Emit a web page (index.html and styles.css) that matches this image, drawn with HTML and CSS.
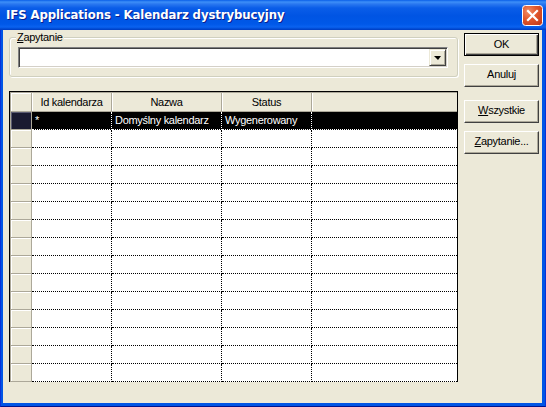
FILE: index.html
```html
<!DOCTYPE html>
<html>
<head>
<meta charset="utf-8">
<link rel="stylesheet" href="styles.css">
</head>
<body>
<div class="window">
  <div class="titlebar">
    <span class="title">IFS Applications - Kalendarz dystrybucyjny</span>
    <span class="close">
      <svg width="21" height="21" viewBox="0 0 21 21">
        <defs>
          <radialGradient id="cg" cx="0.3" cy="0.3" r="0.9">
            <stop offset="0" stop-color="#F08E68"/>
            <stop offset="0.45" stop-color="#E2582C"/>
            <stop offset="1" stop-color="#C1381A"/>
          </radialGradient>
        </defs>
        <rect x="0.5" y="0.5" width="20" height="20" rx="3" ry="3" fill="url(#cg)" stroke="#FFFFFF" stroke-width="1"/>
        <path d="M6 6 L15 15 M15 6 L6 15" stroke="#FFFFFF" stroke-width="2.2" stroke-linecap="square"/>
      </svg>
    </span>
  </div>
  <div class="client">
    <div class="main">
      <div class="group">
        <div class="group-label"><u>Z</u>apytanie</div>
        <div class="combo">
          <div class="combo-text"></div>
          <div class="combo-btn"><span class="arrow"></span></div>
        </div>
      </div>
      <div class="grid">
        <div class="grid-inner">
          <div class="row head">
            <div class="rh"></div>
            <div class="c c1">Id kalendarza</div>
            <div class="c c2">Nazwa</div>
            <div class="c c3">Status</div>
            <div class="c c4"></div>
          </div>
          <div class="row sel">
            <div class="rh"></div>
            <div class="c c1">*</div>
            <div class="c c2">Domyślny kalendarz</div>
            <div class="c c3">Wygenerowany</div>
            <div class="c c4"></div>
          </div>
          <div class="row"><div class="rh"></div><div class="c c1"></div><div class="c c2"></div><div class="c c3"></div><div class="c c4"></div></div>
          <div class="row"><div class="rh"></div><div class="c c1"></div><div class="c c2"></div><div class="c c3"></div><div class="c c4"></div></div>
          <div class="row"><div class="rh"></div><div class="c c1"></div><div class="c c2"></div><div class="c c3"></div><div class="c c4"></div></div>
          <div class="row"><div class="rh"></div><div class="c c1"></div><div class="c c2"></div><div class="c c3"></div><div class="c c4"></div></div>
          <div class="row"><div class="rh"></div><div class="c c1"></div><div class="c c2"></div><div class="c c3"></div><div class="c c4"></div></div>
          <div class="row"><div class="rh"></div><div class="c c1"></div><div class="c c2"></div><div class="c c3"></div><div class="c c4"></div></div>
          <div class="row"><div class="rh"></div><div class="c c1"></div><div class="c c2"></div><div class="c c3"></div><div class="c c4"></div></div>
          <div class="row"><div class="rh"></div><div class="c c1"></div><div class="c c2"></div><div class="c c3"></div><div class="c c4"></div></div>
          <div class="row"><div class="rh"></div><div class="c c1"></div><div class="c c2"></div><div class="c c3"></div><div class="c c4"></div></div>
          <div class="row"><div class="rh"></div><div class="c c1"></div><div class="c c2"></div><div class="c c3"></div><div class="c c4"></div></div>
          <div class="row"><div class="rh"></div><div class="c c1"></div><div class="c c2"></div><div class="c c3"></div><div class="c c4"></div></div>
          <div class="row"><div class="rh"></div><div class="c c1"></div><div class="c c2"></div><div class="c c3"></div><div class="c c4"></div></div>
          <div class="row"><div class="rh"></div><div class="c c1"></div><div class="c c2"></div><div class="c c3"></div><div class="c c4"></div></div>
          <div class="row"><div class="rh"></div><div class="c c1"></div><div class="c c2"></div><div class="c c3"></div><div class="c c4"></div></div>
        </div>
      </div>
    </div>
    <div class="buttons">
      <div class="btn default">OK</div>
      <div class="btn">Anuluj</div>
      <div class="btn b3"><u>W</u>szystkie</div>
      <div class="btn"><u>Z</u>apytanie...</div>
    </div>
  </div>
</div>
</body>
</html>
```

FILE: styles.css
```css
* { box-sizing: border-box; }
html, body { margin: 0; padding: 0; }
body {
  width: 546px;
  height: 407px;
  overflow: hidden;
  font-family: "Liberation Sans", Arial, sans-serif;
  font-size: 11px;
  letter-spacing: -0.3px;
  color: #000;
}
.window {
  width: 546px;
  height: 407px;
  display: flex;
  flex-direction: column;
  background: #0055E5;
  border-left: 1px solid #0831D9;
  border-right: 1px solid #0831D9;
  border-bottom: 1px solid #00138C;
}
.titlebar {
  height: 30px;
  flex: none;
  display: flex;
  align-items: center;
  justify-content: space-between;
  padding: 0 3px 0 6px;
  margin: 0 -1px;
  background: linear-gradient(to bottom,
    #0A5FE8 0px, #3D8FF8 2px, #2A78F0 4px, #0A5DE8 8px,
    #0054E3 16px, #0058E8 24px, #0A62F0 27px, #0048D0 29px, #003BC0 30px);
}
.title {
  color: #FFFFFF;
  font-family: "DejaVu Sans Condensed", "Liberation Sans", sans-serif;
  font-weight: bold;
  font-size: 13px;
  letter-spacing: -0.1px;
  text-shadow: 1px 1px 0 #0A1E8C;
  margin-top: -1px;
}
.close {
  width: 21px;
  height: 21px;
  display: block;
  margin-top: 1px;
}
.close svg { display: block; }
.client {
  flex: 1;
  margin: 0 3px 3px 2px;
  background: #ECE9D8;
  display: flex;
  padding: 0 3px 0 6px;
  gap: 6px;
}
.main {
  width: 449px;
  display: flex;
  flex-direction: column;
}
.group {
  margin-top: 7px;
  border: 1px solid #D0D0BF;
  border-radius: 3px;
  padding: 0 9px 8px 8px;
  box-shadow: inset 1px 1px 0 #FFFFFF, 1px 1px 0 #FFFFFF;
}
.group-label {
  width: fit-content;
  margin: -7px 0 0 -2px;
  padding: 0 1px;
  height: 13px;
  line-height: 13px;
  background: #ECE9D8;
}
.combo {
  margin-top: 3px;
  height: 21px;
  display: flex;
  background: #FFFFFF;
  border-top: 1px solid #808080;
  border-left: 1px solid #808080;
  border-right: 1px solid #FFFFFF;
  border-bottom: 1px solid #FFFFFF;
  box-shadow: inset 1px 1px 0 #404040, inset -1px -1px 0 #D4D0C8;
  padding: 1px;
}
.combo-text { flex: 1; }
.combo-btn {
  width: 17px;
  height: 17px;
  background: #ECE9D8;
  border-top: 1px solid #ECE9D8;
  border-left: 1px solid #ECE9D8;
  border-right: 1px solid #404040;
  border-bottom: 1px solid #404040;
  box-shadow: inset 1px 1px 0 #FFFFFF, inset -1px -1px 0 #ACA899;
  display: flex;
  align-items: center;
  justify-content: center;
}
.arrow {
  width: 0;
  height: 0;
  border-left: 4px solid transparent;
  border-right: 3px solid transparent;
  border-top: 4px solid #000;
  margin-top: 1px;
}
.grid {
  margin-top: 14px;
  border: 1px solid #000;
  border-bottom: none;
  width: 449px;
}
.grid-inner {
  border-left: 1px solid #ACA899;
  border-top: 1px solid #ACA899;
  background: #FFFFFF;
}
.row {
  display: flex;
  height: 18px;
}
.rh {
  width: 21px;
  flex: none;
  background: #ECE9D8;
  border-right: 1px solid #ACA899;
  border-bottom: 1px solid #ACA899;
  box-shadow: inset 1px 1px 0 #FFFFFF;
}
.c {
  flex: none;
  height: 18px;
  line-height: 17px;
  padding: 0 3px;
  white-space: nowrap;
  overflow: hidden;
  border-bottom: 1px dotted #000;
  border-right: 1px dotted #000;
}
.c1 { width: 80px; }
.c2 { width: 110px; }
.c3 { width: 90px; }
.c4 { width: 145px; border-right: none; }
.head { height: 19px; }
.head .rh, .head .c {
  height: 19px;
  line-height: 18px;
  background: #ECE9D8;
  border-bottom: 1px solid #ACA899;
  border-right: 1px solid #ACA899;
  box-shadow: inset 1px 0 0 #FFFFFF;
  text-align: center;
}
.head .rh { box-shadow: inset 1px 1px 0 #FFFFFF; }
.head .c4 { border-right: none; }
.sel .c {
  background: #000;
  color: #FFFFFF;
  border-bottom: 1px dotted #FFFFFF;
  border-right: 1px dotted #FFFFFF;
}
.sel .c4 { border-right: none; }
.sel .rh {
  background: #1A1A30;
  box-shadow: inset 1px 1px 0 #5A5A70;
}
.buttons {
  width: 75px;
  display: flex;
  flex-direction: column;
  padding-top: 3px;
}
.btn {
  width: 75px;
  height: 23px;
  line-height: 19px;
  text-align: center;
  background: #ECE9D8;
  border-top: 1px solid #FFFFFF;
  border-left: 1px solid #FFFFFF;
  border-right: 1px solid #404040;
  border-bottom: 1px solid #404040;
  box-shadow: inset -1px -1px 0 #ACA899;
  margin-bottom: 8px;
}
.btn.default {
  border: 1px solid #000;
  box-shadow: inset 1px 1px 0 #FFFFFF, inset -1px -1px 0 #404040, inset -2px -2px 0 #ACA899;
  line-height: 21px;
}
.btn.b3 { margin-top: 5px; }
```
